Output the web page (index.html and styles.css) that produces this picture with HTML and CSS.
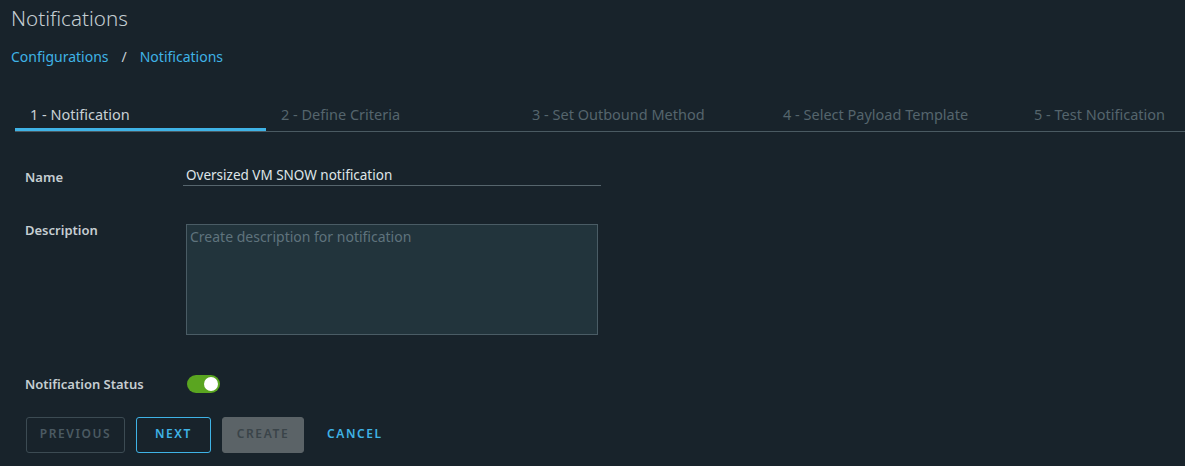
FILE: index.html
```html
<!DOCTYPE html>
<html>
<head>
<meta charset="utf-8">
<link rel="stylesheet" href="styles.css">
</head>
<body>
<div class="page">
  <h1 class="title">Notifications</h1>
  <nav class="crumbs">
    <a class="crumb">Configurations</a>
    <span class="sep">/</span>
    <a class="crumb">Notifications</a>
  </nav>
  <div class="tabs">
    <div class="tab active">1 - Notification</div>
    <div class="tab">2 - Define Criteria</div>
    <div class="tab">3 - Set Outbound Method</div>
    <div class="tab">4 - Select Payload Template</div>
    <div class="tab">5 - Test Notification</div>
  </div>
  <form class="form">
    <div class="row row-name">
      <label class="label">Name</label>
      <div class="input">Oversized VM SNOW notification</div>
    </div>
    <div class="row row-desc">
      <label class="label">Description</label>
      <div class="textarea"><span class="placeholder">Create description for notification</span></div>
    </div>
    <div class="row row-status">
      <label class="label">Notification Status</label>
      <div class="toggle"><span class="knob"></span></div>
    </div>
    <div class="buttons">
      <button type="button" class="btn btn-disabled">Previous</button>
      <button type="button" class="btn btn-outline">Next</button>
      <button type="button" class="btn btn-solid-disabled">Create</button>
      <button type="button" class="btn btn-link">Cancel</button>
    </div>
  </form>
</div>
</body>
</html>
```
FILE: styles.css
```css
html, body {
  margin: 0;
  padding: 0;
  background: #18232b;
  width: 1185px;
  height: 466px;
  overflow: hidden;
}
body {
  font-family: "Noto Sans", "Liberation Sans", sans-serif;
  color: #c9d1d5;
}
.page {
  padding-top: 4px;
}
.title {
  margin: 0 0 0 11px;
  font-size: 20.6px;
  font-weight: 300;
  line-height: 28px;
  color: #c4cdd2;
}
.crumbs {
  margin: 15px 0 0 11px;
  font-size: 14px;
  line-height: 20px;
  display: flex;
}
.crumb {
  color: #3fb3e6;
}
.sep {
  color: #c9d1d5;
  margin: 0 13px;
}
.tabs {
  margin: 28px 0 0 15px;
  display: flex;
  border-bottom: 1px solid #4a5a62;
  overflow: hidden;
  height: 36px;
}
.tab {
  flex: 0 0 251px;
  box-sizing: border-box;
  padding: 9px 0 0 15px;
  font-size: 14.5px;
  line-height: 20px;
  color: #55656d;
  white-space: nowrap;
}
.tab.active {
  color: #c9d1d5;
  border-bottom: 3px solid #3fb3e6;
}
.form {
  padding-left: 25px;
  margin-top: 30px;
}
.row {
  display: flex;
  align-items: flex-start;
}
.label {
  width: 158px;
  flex: 0 0 158px;
  font-size: 13px;
  font-weight: 600;
  color: #c6ced2;
  line-height: 16px;
}
.row-name {
  height: 25px;
}
.row-name .label {
  padding-top: 7px;
}
.input {
  box-sizing: border-box;
  width: 418px;
  height: 24px;
  padding: 5px 0 0 3px;
  font-size: 13.5px;
  line-height: 16px;
  color: #dfe5e8;
  border-bottom: 1px solid #56656d;
}
.row-desc {
  margin-top: 37px;
}
.row-desc .label {
  margin-top: -2px;
}
.textarea {
  box-sizing: border-box;
  margin-left: 3px;
  width: 412px;
  height: 111px;
  background: #22343c;
  border: 1px solid #4a5c65;
  padding: 0 3px;
}
.placeholder {
  font-size: 14px;
  line-height: 18px;
  color: #5f737c;
}
.row-status {
  margin-top: 40px;
  align-items: center;
}
.toggle {
  margin-left: 4px;
  width: 33px;
  height: 18px;
  border-radius: 9px;
  background: #5aa520;
  position: relative;
}
.knob {
  position: absolute;
  right: 2px;
  top: 2px;
  width: 14px;
  height: 14px;
  border-radius: 50%;
  background: #ffffff;
}
.buttons {
  margin-top: 24px;
  display: flex;
  gap: 11px;
  margin-left: 1px;
}
.btn {
  box-sizing: border-box;
  height: 36px;
  font-family: "Noto Sans", "Liberation Sans", sans-serif;
  font-size: 12px;
  font-weight: 600;
  letter-spacing: 1.6px;
  line-height: 16px;
  text-transform: uppercase;
  border-radius: 3px;
  background: transparent;
  padding: 0 0 2px 0;
}
.btn-disabled {
  width: 99px;
  border: 1px solid #3c4b53;
  color: #4b5a62;
}
.btn-outline {
  width: 75px;
  border: 1px solid #3fb3e6;
  color: #3fb3e6;
}
.btn-solid-disabled {
  width: 82px;
  border: 1px solid #5b6367;
  background: #5b6367;
  color: #3a4449;
}
.btn-link {
  border: none;
  color: #3fb3e6;
  padding: 0 0 2px 12px;
}
```
